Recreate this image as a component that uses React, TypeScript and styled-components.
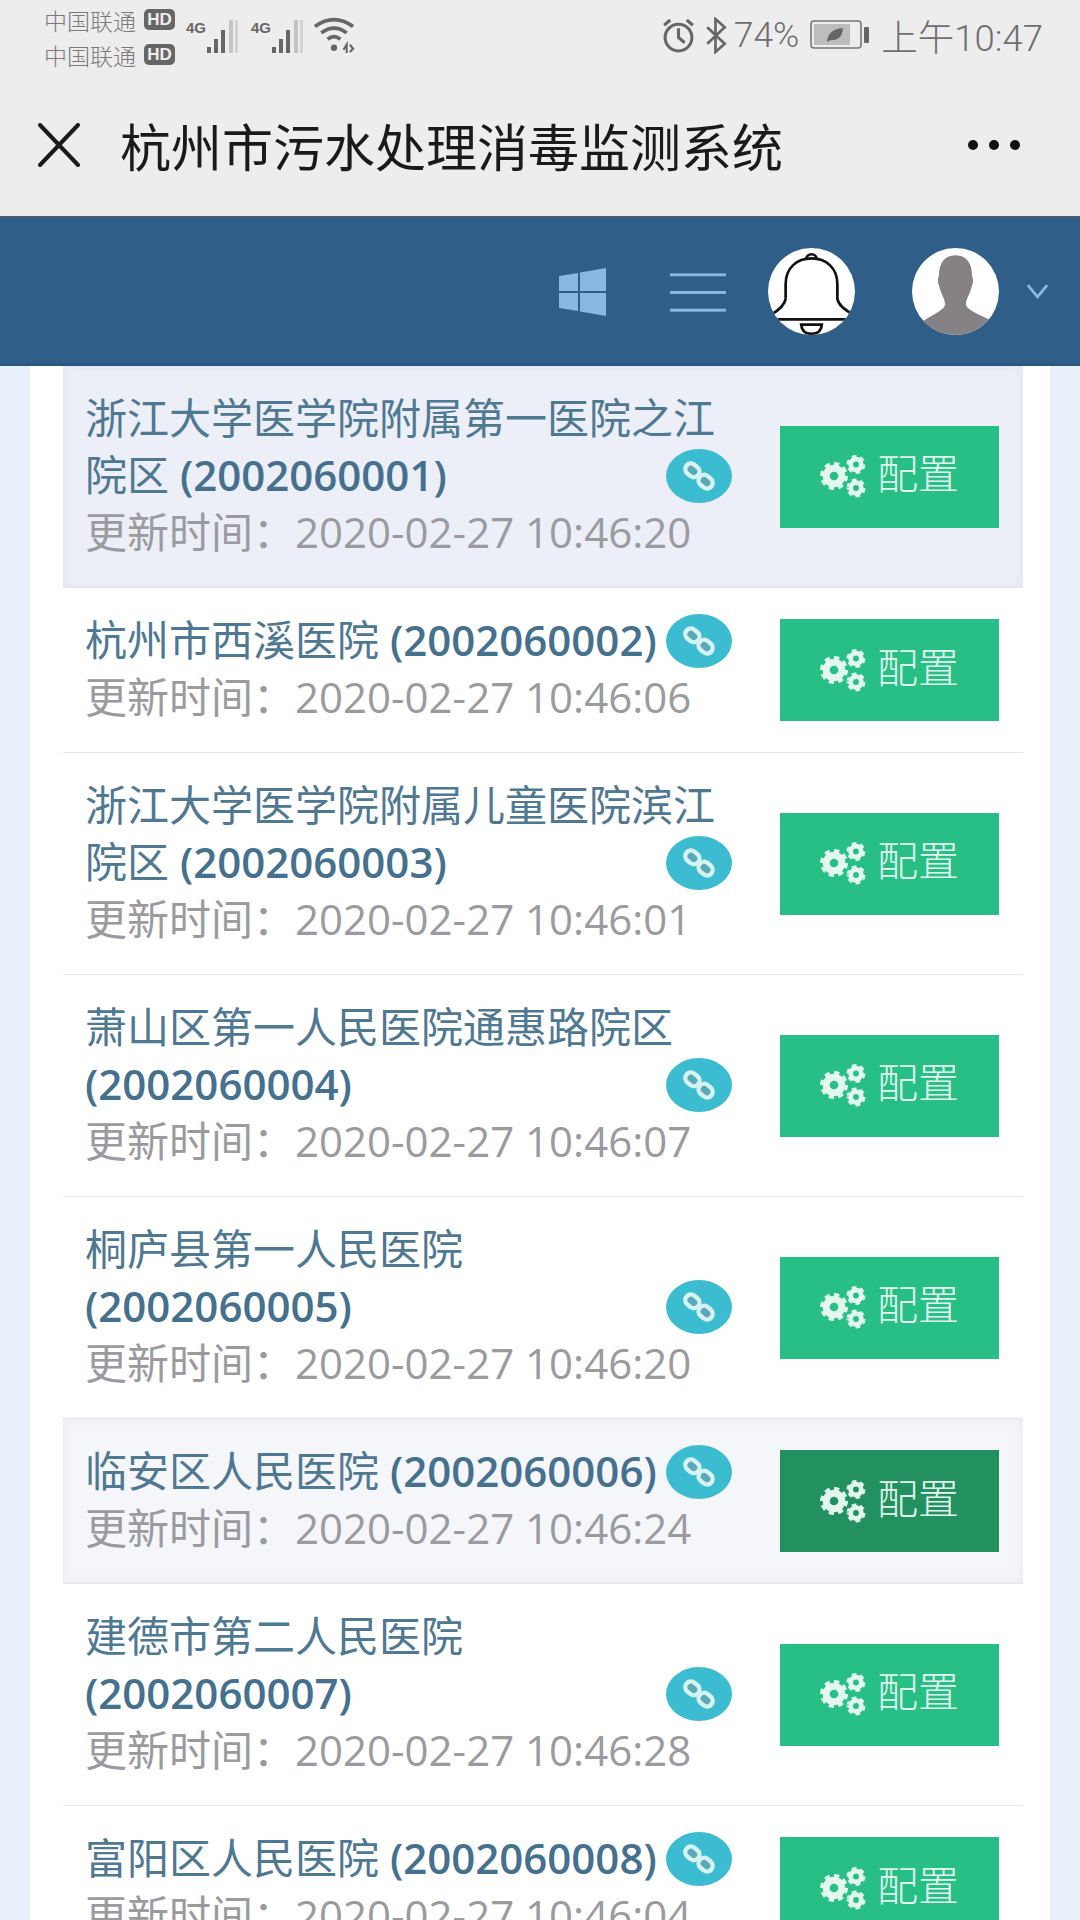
import React from 'react';
import styled, { createGlobalStyle } from 'styled-components';

const GlobalStyle = createGlobalStyle`
  html, body {
    margin: 0;
    padding: 0;
    background: #e8f0fb;
  }
  * {
    box-sizing: border-box;
  }
`;

const Page = styled.div`
  width: 1080px;
  height: 1920px;
  overflow: hidden;
  font-family: "Open Sans", "Noto Sans CJK SC", sans-serif;
  background: #e8f0fb;
`;

const StatusBar = styled.div`
  height: 74px;
  display: flex;
  justify-content: space-between;
  padding: 0 37px 4px 44px;
  background: #eeeded;
  color: #6e6e6e;
`;

const StatusGroup = styled.div`
  display: flex;
  align-items: center;
`;

const Carriers = styled.div`
  width: 131px;
  margin: 2px 11px 0 0;
  align-self: flex-start;
`;

const Carrier = styled.div`
  height: 35px;
  display: flex;
  align-items: center;
  justify-content: space-between;
  font-size: 23px;
  font-weight: 300;
  color: #7a7a7a;
`;

const HdTag = styled.span`
  width: 31px;
  height: 21px;
  border-radius: 5px;
  background: #666;
  color: #eee;
  font-size: 17px;
  font-weight: 700;
  line-height: 21px;
  text-align: center;
  font-family: "Liberation Sans", sans-serif;
`;

const Signal = styled.div`
  width: 54px;
  height: 40px;
  margin: 4px 11px 0 0;
  display: flex;
  position: relative;
`;

const NetLabel = styled.span`
  position: absolute;
  left: 0;
  top: 3px;
  font-size: 15px;
  font-weight: 700;
  line-height: 16px;
  color: #666;
  font-family: "Liberation Sans", sans-serif;
`;

const StatusIcon = styled.svg<{ $gap?: number }>`
  display: block;
  margin-right: ${({ $gap }) => $gap ?? 0}px;
`;

const WifiIcon = styled.svg`
  display: block;
  margin-left: -3px;
`;

const StatusText = styled.span<{ $gap?: number; $size: number }>`
  font-size: ${({ $size }) => $size}px;
  font-weight: 300;
  margin-right: ${({ $gap }) => $gap ?? 0}px;
  font-family: "Roboto", "Noto Sans CJK SC", sans-serif;
  white-space: nowrap;
`;

const TitleBar = styled.div`
  height: 142px;
  display: flex;
  align-items: center;
  padding: 0 60px 0 38px;
  background: #eeeded;
`;

const TitleText = styled.div`
  flex: 1;
  margin-left: 40px;
  font-size: 51px;
  font-weight: 400;
  color: #1a1a1a;
  font-family: "Noto Sans CJK SC", sans-serif;
  white-space: nowrap;
`;

const Dots = styled.div`
  display: flex;
  gap: 11px;
  span {
    width: 10px;
    height: 10px;
    border-radius: 50%;
    background: #111;
  }
`;

const Header = styled.header`
  height: 150px;
  display: flex;
  align-items: center;
  justify-content: flex-end;
  padding: 2px 31px 0 0;
  background: #2f5f89;
  border-top: 2px solid #47606f;
  border-bottom: 3px solid #2a5780;
`;

const HeaderIcon = styled.svg<{ $gap: number }>`
  display: block;
  margin-right: ${({ $gap }) => $gap}px;
  flex: none;
`;

const Panel = styled.main`
  margin: 0 30px;
  padding: 0 27px 0 33px;
  background: #fff;
  height: 1554px;
  overflow: hidden;
`;

const Row = styled.div<{ $tone?: 'selected' | 'hover' }>`
  display: flex;
  align-items: center;
  padding: 25px 24px 25px 22px;
  border-bottom: 1px solid #e6e7eb;
  box-shadow: ${({ $tone }) => ($tone ? '0 0 10px rgba(190, 194, 208, 0.25) inset' : 'none')};
  background: ${({ $tone }) =>
    $tone === 'selected' ? '#eceff8' : $tone === 'hover' ? '#f5f6fa' : '#fff'};
`;

const Info = styled.div`
  width: 647px;
  flex: none;
  margin: -2px 0 2px;
  font-size: 42px;
  line-height: 57px;
`;

const Title = styled.div`
  color: #4f7892;
`;

const Code = styled.span`
  font-weight: 600;
  color: #45708e;
`;

const LinkBadge = styled.span`
  float: right;
  width: 66px;
  height: 54px;
  margin-top: 3px;
  border-radius: 50%;
  background: #3bbcd0;
  display: flex;
  align-items: center;
  justify-content: center;
`;

const Updated = styled.div`
  color: #9b9b9f;
`;

const ConfigButton = styled.button<{ $pressed?: boolean }>`
  width: 219px;
  height: 102px;
  margin-left: 48px;
  flex: none;
  border: none;
  border-radius: 0;
  padding: 0;
  display: flex;
  align-items: center;
  justify-content: center;
  gap: 11px;
  background: ${({ $pressed }) => ($pressed ? '#23905f' : '#27bf85')};
  color: #e2f8ee;
  font-family: "Noto Sans CJK SC", sans-serif;
  font-size: 41px;
  font-weight: 300;
  line-height: 1;
`;

const ButtonLabel = styled.span`
  padding-bottom: 10px;
`;

type Hospital = {
  name: string;
  code: string;
  time: string;
  tone?: 'selected' | 'hover';
  pressed?: boolean;
};

const hospitals: Hospital[] = [
  { name: '浙江大学医学院附属第一医院之江院区', code: '2002060001', time: '2020-02-27 10:46:20', tone: 'selected' },
  { name: '杭州市西溪医院', code: '2002060002', time: '2020-02-27 10:46:06' },
  { name: '浙江大学医学院附属儿童医院滨江院区', code: '2002060003', time: '2020-02-27 10:46:01' },
  { name: '萧山区第一人民医院通惠路院区', code: '2002060004', time: '2020-02-27 10:46:07' },
  { name: '桐庐县第一人民医院', code: '2002060005', time: '2020-02-27 10:46:20' },
  { name: '临安区人民医院', code: '2002060006', time: '2020-02-27 10:46:24', tone: 'hover', pressed: true },
  { name: '建德市第二人民医院', code: '2002060007', time: '2020-02-27 10:46:28' },
  { name: '富阳区人民医院', code: '2002060008', time: '2020-02-27 10:46:04' },
];

const SignalBars = () => (
  <Signal>
    <NetLabel>4G</NetLabel>
    <svg width="54" height="40" viewBox="0 0 54 40">
      <rect x="21" y="30" width="4" height="6" fill="#666" />
      <rect x="28" y="22" width="4" height="14" fill="#666" />
      <rect x="35" y="13" width="4" height="23" fill="#666" />
      <rect x="43" y="3" width="4" height="33" fill="#c4c4c4" />
      <rect x="49" y="3" width="3" height="33" fill="#d2d2d2" />
    </svg>
  </Signal>
);

const ChainIcon = () => (
  <svg width="34" height="32" viewBox="0 0 36 34" fill="#5aa9b8" stroke="#d5f3f3" strokeWidth="4.6">
    <rect x="3" y="5" width="16" height="12" rx="6" transform="rotate(40 11 11)" />
    <rect x="17" y="17" width="16" height="12" rx="6" transform="rotate(40 25 23)" />
  </svg>
);

// one gear: a ring plus a dashed outer circle for the teeth
const Cog = ({ cx, cy, r, teeth }: { cx: number; cy: number; r: number; teeth: number }) => (
  <g fill="none" stroke="currentColor">
    <circle cx={cx} cy={cy} r={r * 0.56} strokeWidth={r * 0.5} />
    <circle cx={cx} cy={cy} r={r * 0.82} strokeWidth={r * 0.36} pathLength={teeth * 2} strokeDasharray="1.1 0.9" />
  </g>
);

const CogsIcon = () => (
  <svg width="46" height="43" viewBox="0 0 46 43">
    <Cog cx={14} cy={21} r={14} teeth={8} />
    <Cog cx={36} cy={9.5} r={9.5} teeth={6} />
    <Cog cx={36} cy={33} r={9.5} teeth={6} />
  </svg>
);

const App = () => (
  <Page>
    <GlobalStyle />
    <StatusBar>
      <StatusGroup>
        <Carriers>
          <Carrier>中国联通<HdTag>HD</HdTag></Carrier>
          <Carrier>中国联通<HdTag>HD</HdTag></Carrier>
        </Carriers>
        <SignalBars />
        <SignalBars />
        <WifiIcon width="42" height="36" viewBox="0 0 38 34" fill="none" stroke="#666">
          <path d="M1 9 Q19 -4 37 9" strokeWidth="3.5" />
          <path d="M7 15 Q19 6 31 15" strokeWidth="3.5" />
          <path d="M13 21 Q19 16 25 21" strokeWidth="3.5" />
          <circle cx="19" cy="29" r="3" fill="#666" stroke="none" />
          <path d="M28 31 l3 -5 v8 M34 26 l3 4 l-3 3" strokeWidth="2" />
        </WifiIcon>
      </StatusGroup>
      <StatusGroup>
        <StatusIcon $gap={10} width="33" height="35" viewBox="0 0 32 34" fill="none" stroke="#666" strokeWidth="3">
          <circle cx="16" cy="19" r="13" />
          <path d="M16 10 V19 L22 24" />
          <path d="M2 7 L8 2 M30 7 L24 2" />
        </StatusIcon>
        <StatusIcon $gap={6} width="23" height="37" viewBox="0 0 22 36" fill="none" stroke="#666" strokeWidth="2.6">
          <path d="M2 10 L19 26 L10 34 V2 L19 10 L2 26" />
        </StatusIcon>
        <StatusText $size={35.5} $gap={10}>74%</StatusText>
        <StatusIcon $gap={11} width="61" height="30" viewBox="0 0 59 30">
          <rect x="1" y="1" width="50" height="27" rx="3" fill="none" stroke="#777" strokeWidth="1.6" />
          <rect x="4" y="4" width="36" height="21" fill="#bdbdbd" />
          <path d="M17 22 Q18 9 33 8 Q32 21 21 20 Z" fill="#666" />
          <rect x="54" y="7" width="5" height="16" rx="1" fill="#666" />
        </StatusIcon>
        <StatusText $size={36.5}>上午10:47</StatusText>
      </StatusGroup>
    </StatusBar>

    <TitleBar>
      <svg width="42" height="44" viewBox="0 0 42 44" stroke="#1a1a1a" strokeWidth="4" strokeLinecap="round">
        <path d="M2 2 L40 42 M40 2 L2 42" />
      </svg>
      <TitleText>杭州市污水处理消毒监测系统</TitleText>
      <Dots><span /><span /><span /></Dots>
    </TitleBar>

    <Header>
      <HeaderIcon $gap={63} width="49" height="48" viewBox="0 0 47 48" fill="#8ab8e4">
        <path d="M0 8 L19 5 V23 H0 Z M21 4.5 L47 0 V23 H21 Z M0 25 H19 V43 L0 40 Z M21 25 H47 V48 L21 43.5 Z" />
      </HeaderIcon>
      <HeaderIcon $gap={42} width="56" height="40" viewBox="0 0 57 40" fill="#8ab8e4">
        <rect x="0" y="1" width="57" height="3" />
        <rect x="0" y="19" width="57" height="3" />
        <rect x="0" y="37" width="57" height="3" />
      </HeaderIcon>
      <HeaderIcon $gap={57} width="87" height="89" viewBox="0 0 84 86">
        <defs>
          <clipPath id="bellClip"><circle cx="42" cy="43" r="42" /></clipPath>
        </defs>
        <circle cx="42" cy="43" r="42" fill="#fff" />
        <g clipPath="url(#bellClip)" fill="none" stroke="#111" strokeWidth="2.6">
          <path d="M37 12 a5 5 0 1 1 10 0" />
          <path d="M17 50 V36 C17 20 28 11 42 11 C56 11 67 20 67 36 V50 Q68 58 84 66" />
          <path d="M17 50 Q16 58 2 66" />
          <path d="M0 70 H84" />
          <path d="M32 75 H52 Q51 84 42 84 Q33 84 32 75 Z" />
        </g>
      </HeaderIcon>
      <HeaderIcon $gap={27} width="87" height="89" viewBox="0 0 84 86">
        <defs>
          <clipPath id="userClip"><circle cx="42" cy="43" r="42" /></clipPath>
        </defs>
        <circle cx="42" cy="43" r="42" fill="#fff" />
        <g clipPath="url(#userClip)" fill="#858184">
          <path d="M42 8 C53 8 58 16 58 28 Q60 32 58 37 C56 46 52 50 52 56 C54 62 68 66 78 72 L84 90 H0 L10 72 C18 66 30 62 32 56 C32 50 28 46 26 37 Q24 32 26 28 C26 16 31 8 42 8 Z" />
        </g>
      </HeaderIcon>
      <svg width="23" height="15" viewBox="0 0 20 14" fill="none" stroke="#8ab8e4" strokeWidth="2.6">
        <path d="M1 1 L10 12 L19 1" />
      </svg>
    </Header>

    <Panel>
      {hospitals.map((h) => (
        <Row key={h.code} $tone={h.tone}>
          <Info>
            <Title>
              {h.name} <Code>({h.code})</Code>
              <LinkBadge><ChainIcon /></LinkBadge>
            </Title>
            <Updated>更新时间：{h.time}</Updated>
          </Info>
          <ConfigButton $pressed={h.pressed}>
            <CogsIcon />
            <ButtonLabel>配置</ButtonLabel>
          </ConfigButton>
        </Row>
      ))}
    </Panel>
  </Page>
);

export default App;
